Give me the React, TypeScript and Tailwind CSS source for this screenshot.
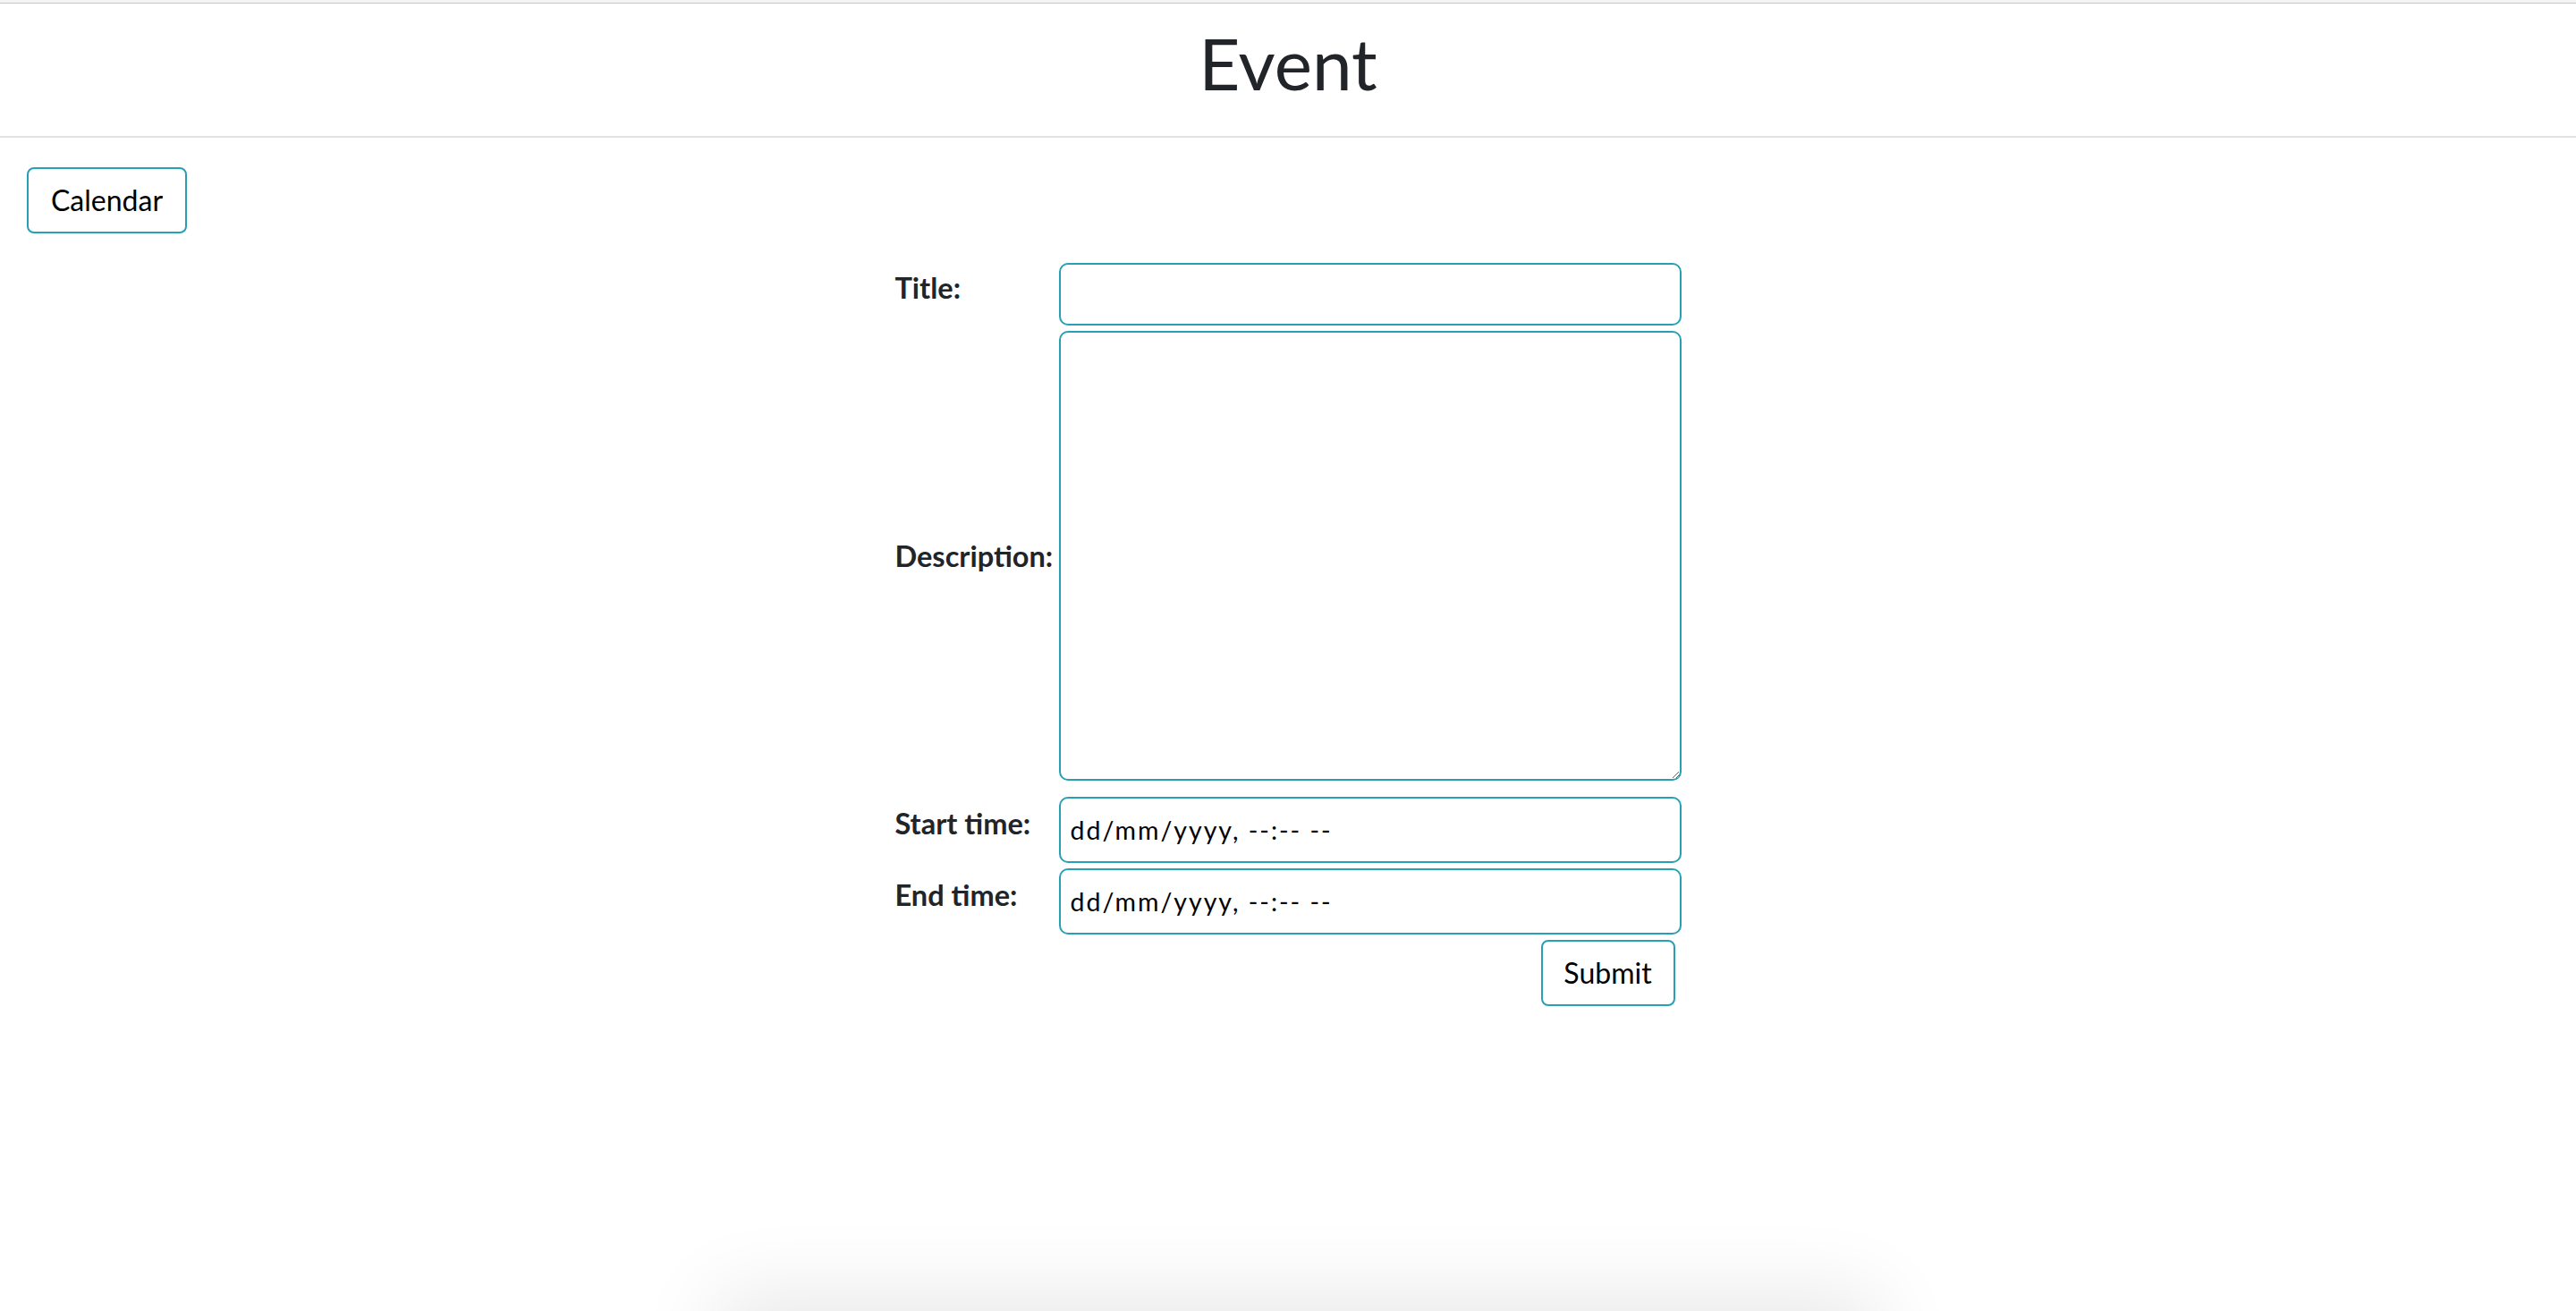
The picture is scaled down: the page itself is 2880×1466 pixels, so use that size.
const font = "font-['Lato','Noto_Sans',sans-serif]";

function FieldRow({
  label,
  labelPad = "pb-[14px]",
  children,
}: {
  label: string;
  labelPad?: string;
  children: React.ReactNode;
}) {
  return (
    <div className="flex">
      <div className={`w-[183px] flex items-center ${labelPad}`}>
        <span className="text-[32.5px] font-bold text-[#212529]">{label}</span>
      </div>
      <div className="w-[696px]">{children}</div>
    </div>
  );
}

export default function App() {
  const boxCls =
    "block w-full rounded-[10px] border-2 border-[#28a0b4] bg-white px-[11px] text-black outline-none";
  const dateCls = `${boxCls} h-[74px] text-[28.5px] tracking-[2px]`;

  return (
    <div className={`relative min-h-[1466px] bg-white overflow-hidden ${font}`}>
      {/* header */}
      <div className="h-[3px] bg-[#f4f4f4]" />
      <div className="h-px bg-[#c8c8c8]" />
      <header className="h-[150px] border-b-2 border-[#e2e2e2] flex justify-center">
        <h1 className="pt-[6px] text-[80px] leading-[120px] font-normal text-[#212529]">
          Event
        </h1>
      </header>

      <div className="pl-[30px] pt-[33px]">
        <button className="h-[74px] w-[179px] rounded-[8px] border-2 border-[#28a0b4] bg-white text-[32px] text-black">
          Calendar
        </button>
      </div>

      <form className="mx-auto w-[879px] mt-[33px] flex flex-col">
        <FieldRow label="Title:">
          <input type="text" className={`${boxCls} h-[70px] text-[26.67px]`} />
        </FieldRow>
        <div className="h-[6px]" />
        <FieldRow label="Description:" labelPad="pt-[2px]">
          <textarea className={`${boxCls} h-[503px] text-[26.67px]`} />
        </FieldRow>
        <div className="h-[18px]" />
        <FieldRow label="Start time:">
          <input type="text" readOnly defaultValue="dd/mm/yyyy, --:-- --" className={dateCls} />
        </FieldRow>
        <div className="h-[6px]" />
        <FieldRow label="End time:">
          <input type="text" readOnly defaultValue="dd/mm/yyyy, --:-- --" className={dateCls} />
        </FieldRow>
        <div className="flex justify-end pr-[7px] pt-[6px]">
          <button
            type="button"
            className="h-[74px] w-[150px] rounded-[8px] border-2 border-[#28a0b4] bg-white text-[32px] text-black"
          >
            Submit
          </button>
        </div>
      </form>

      {/* panel peeking from below the viewport */}
      <div className="absolute left-[820px] top-[1466px] w-[1260px] h-[200px] bg-white shadow-[0_0_90px_20px_rgba(0,0,0,0.09)]" />
    </div>
  );
}
